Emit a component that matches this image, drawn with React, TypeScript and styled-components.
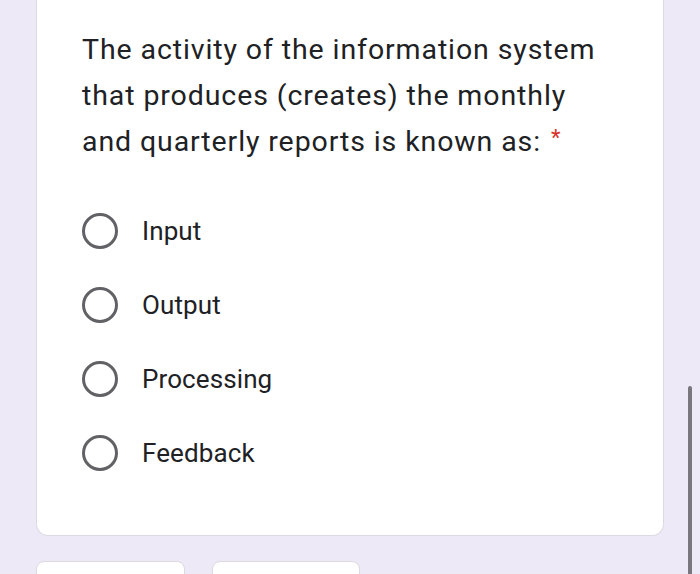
import React from "react";
import styled, { createGlobalStyle } from "styled-components";

const Global = createGlobalStyle`
  html, body { margin: 0; padding: 0; background: #ede9f7; }
  body { width: 700px; height: 574px; overflow: hidden; }
`;

const Page = styled.div`
  position: relative;
  width: 700px;
  height: 574px;
  overflow: hidden;
  background: #ede9f7;
  padding: 0 36px;
  box-sizing: border-box;
  font-family: Roboto, "Liberation Sans", sans-serif;
`;

const Card = styled.section`
  width: 628px;
  box-sizing: border-box;
  background: #ffffff;
  border: 1px solid #dcdae0;
  border-top: none;
  border-radius: 0 0 12px 12px;
  padding: 27px 44px 45px 45px;
`;

const Question = styled.div`
  font-family: Roboto, "Liberation Sans", sans-serif;
  font-size: 28.5px;
  line-height: 46px;
  color: #202124;
  letter-spacing: 0.9px;
  max-width: 532px;
`;

const Required = styled.span`
  color: #d93025;
  font-size: 22px;
  line-height: 0;
  margin-left: 10px;
  vertical-align: 6px;
`;

const Options = styled.div`
  margin-top: 29px;
  display: flex;
  flex-direction: column;
`;

const Option = styled.label`
  display: flex;
  align-items: center;
  height: 74px;
  gap: 24px;
`;

const Radio = styled.span`
  width: 36px;
  height: 36px;
  box-sizing: border-box;
  border: 3.3px solid #626266;
  border-radius: 50%;
  flex-shrink: 0;
`;

const OptionText = styled.span`
  font-size: 26px;
  color: #202124;
  letter-spacing: 0.1px;
`;

const Footer = styled.div`
  display: flex;
  gap: 27px;
  margin-top: 25px;
`;

const FooterCard = styled.div<{ $w: number }>`
  width: ${(p) => p.$w}px;
  height: 40px;
  background: #ffffff;
  border: 1px solid #dcdae0;
  border-radius: 8px 8px 0 0;
  box-sizing: border-box;
`;

const ScrollThumb = styled.div`
  position: absolute;
  left: 688px;
  top: 386px;
  width: 4px;
  height: 200px;
  border-radius: 2px;
  background: #7a767d;
`;

const options = ["Input", "Output", "Processing", "Feedback"];

export default function App() {
  return (
    <Page>
      <Global />
      <Card>
        <Question>
          The activity of the information system that produces (creates) the monthly and quarterly reports is known as:
          <Required>*</Required>
        </Question>
        <Options>
          {options.map((o) => (
            <Option key={o}>
              <Radio />
              <OptionText>{o}</OptionText>
            </Option>
          ))}
        </Options>
      </Card>
      <Footer>
        <FooterCard $w={149} />
        <FooterCard $w={148} />
      </Footer>
      <ScrollThumb />
    </Page>
  );
}
